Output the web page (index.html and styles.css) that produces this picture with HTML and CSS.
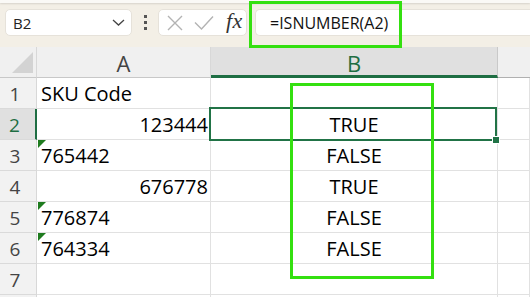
FILE: index.html
```html
<!DOCTYPE html>
<html>
<head>
<meta charset="utf-8">
<link rel="stylesheet" href="styles.css">
</head>
<body>
<div class="app">
  <div class="toolbar">
    <div class="ribbon-edge"></div>
    <div class="fbar">
      <div class="namebox">
        <span class="nb-text">B2</span>
        <svg class="chev" width="13" height="7" viewBox="0 0 13 7"><path d="M1 1 L6.5 6 L12 1" fill="none" stroke="#444" stroke-width="1.3"/></svg>
      </div>
      <div class="dots"><i></i><i></i><i></i></div>
      <div class="fxbox">
        <svg class="ico-x" width="16" height="16" viewBox="0 0 16 16"><path d="M1 1 L15 15 M15 1 L1 15" stroke="#b3b3b3" stroke-width="1.4" fill="none"/></svg>
        <svg class="ico-check" width="20" height="16" viewBox="0 0 20 16"><path d="M1 7.5 L7.5 14 L19 1.5" stroke="#b3b3b3" stroke-width="1.4" fill="none"/></svg>
        <span class="fx">fx</span>
      </div>
      <div class="formula">=ISNUMBER(A2)</div>
    </div>
  </div>
  <div class="sheet">
    <div class="hd corner"><span class="tri"></span></div>
    <div class="hd colh">A</div>
    <div class="hd colh sel">B</div>
    <div class="hd colh last"></div>

    <div class="rh">1</div><div class="c left">SKU Code</div><div class="c ctr"></div><div class="c"></div>
    <div class="rh sel">2</div><div class="c right">123444</div><div class="c ctr">TRUE</div><div class="c"></div>
    <div class="rh">3</div><div class="c left flag">765442</div><div class="c ctr">FALSE</div><div class="c"></div>
    <div class="rh">4</div><div class="c right">676778</div><div class="c ctr">TRUE</div><div class="c"></div>
    <div class="rh">5</div><div class="c left flag">776874</div><div class="c ctr">FALSE</div><div class="c"></div>
    <div class="rh">6</div><div class="c left flag">764334</div><div class="c ctr">FALSE</div><div class="c"></div>
    <div class="rh">7</div><div class="c"></div><div class="c ctr"></div><div class="c"></div>
    <div class="rh"></div><div class="c"></div><div class="c ctr"></div><div class="c"></div>
  </div>
  <div class="selbox"><span class="handle"></span></div>
  <div class="mark mark-formula"></div>
  <div class="mark mark-col"></div>
</div>
</body>
</html>
```
FILE: styles.css
```css
* { box-sizing: border-box; }
html, body { margin: 0; padding: 0; }
body { width: 530px; height: 297px; overflow: hidden; background: #fff; font-family: "Open Sans", "Liberation Sans", sans-serif; }
.app { position: relative; width: 530px; height: 297px; overflow: hidden; }

.toolbar { height: 47px; background: #f3efe6; display: flex; flex-direction: column; }
.ribbon-edge { height: 3px; background: #faf9f6; box-shadow: 0 1px 2px rgba(0,0,0,0.12); }
.fbar { margin-top: 6px; height: 27px; display: flex; align-items: stretch; padding-left: 5px; }
.namebox { width: 127px; background: #fff; border: 1px solid #e6e2da; border-radius: 5px; display: flex; align-items: center; justify-content: space-between; padding: 0 6px 0 7px; }
.nb-text { font-size: 15px; color: #222; }
.chev { margin-right: 0; }
.dots { width: 26px; display: flex; flex-direction: column; align-items: center; justify-content: center; gap: 3px; }
.dots i { display: block; width: 3px; height: 3px; background: #555; }
.fxbox { width: 89px; background: #fff; border: 1px solid #e6e2da; border-radius: 5px; display: flex; align-items: center; padding-left: 8px; }
.ico-x { margin-right: 11px; }
.ico-check { margin-right: 12px; margin-top: 1px; }
.fx { font-family: "Liberation Serif", "DejaVu Serif", serif; font-style: italic; font-size: 22px; color: #333; line-height: 1; margin-top: -3px; letter-spacing: 0.5px; }
.formula { flex: 1; margin-left: 8px; background: #fff; border: 1px solid #e6e2da; border-right: none; border-radius: 5px 0 0 5px; font-size: 16px; color: #111; display: flex; align-items: center; padding-left: 14px; }

.sheet { display: grid; grid-template-columns: 37px 174px 287px 1fr; grid-auto-rows: 31px; }
.hd { background: #f0f0f0; border-right: 1px solid #d8d8d8; border-bottom: 1px solid #c8c8c8; font-size: 22px; color: #444; text-align: center; line-height: 30px; padding-top: 1px; }
.hd.sel { background: #e0e0e0; color: #1e6e43; border-bottom: 3px solid #1e6e43; border-right-color: #c9c9c9; }
.hd.last { border-right: none; border-bottom-color: #b0b0b0; }
.corner { position: relative; }
.tri { position: absolute; right: 3px; bottom: 4px; width: 0; height: 0; border-style: solid; border-width: 0 0 21px 21px; border-color: transparent transparent #d3d3d3 transparent; }
.rh { background: #f2f2f2; border-right: 1px solid #d8d8d8; border-bottom: 1px solid #dadada; font-size: 19px; color: #444; text-align: center; line-height: 30px; padding-top: 1px; padding-right: 6px; }
.rh.sel { background: #e0e0e0; color: #1e6e43; border-right: 2px solid #1e6e43; }
.c { border-right: 1px solid #e1e1e1; border-bottom: 1px solid #e1e1e1; font-size: 20px; color: #000; line-height: 28px; padding-top: 2px; white-space: nowrap; position: relative; }
.c.left { padding-left: 4px; }
.c.right { text-align: right; padding-right: 2px; }
.c.ctr { text-align: center; }
.c.flag::before { content: ""; position: absolute; left: 1px; top: 0; width: 0; height: 0; border-style: solid; border-width: 8px 8px 0 0; border-color: #1e7b1e transparent transparent transparent; }

.selbox { position: absolute; left: 209px; top: 107px; width: 288px; height: 34px; border: 2px solid #217346; }
.handle { position: absolute; right: -5px; bottom: -5px; width: 8px; height: 8px; background: #217346; border: 1px solid #fff; }
.mark { position: absolute; border: 3px solid #34e010; }
.mark-formula { left: 249px; top: 1px; width: 153px; height: 47px; }
.mark-col { left: 290px; top: 83px; width: 144px; height: 196px; }
```
